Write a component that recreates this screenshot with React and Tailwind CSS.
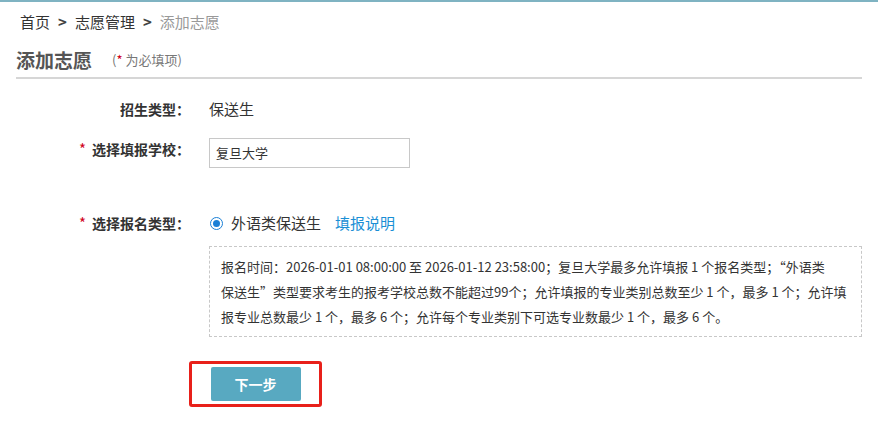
import React from "react";

export default function App() {
  const font = { fontFamily: '"Microsoft YaHei","Noto Sans CJK SC","Noto Sans",sans-serif' };
  return (
    <div className="w-[878px] h-[423px] bg-white overflow-hidden text-[#333]" style={font}>
      <div className="h-[2px] bg-[#7fb3c2]" />
      <div className="flex items-center h-[40px] pl-[20px] text-[15px] text-[#333]">
        <span>首页</span>
        <span className="mx-[8px] font-bold text-[#444]">&gt;</span>
        <span>志愿管理</span>
        <span className="mx-[8px] font-bold text-[#444]">&gt;</span>
        <span className="text-[#999]">添加志愿</span>
      </div>
      <div className="mx-[16px] flex items-center h-[37px] border-b-2 border-[#d6d6d6]">
        <span className="text-[19px] font-bold text-[#555] leading-none">添加志愿</span>
        <span className="ml-[20px] text-[13px] text-[#777]">
          (<span className="text-[#d0021b]">*</span> 为必填项)
        </span>
      </div>

      <div className="flex items-center mt-[19px] h-[22px] text-[14px]">
        <div className="w-[190px] text-right font-bold">招生类型：</div>
        <div className="ml-[19px] text-[15px]">保送生</div>
      </div>

      <div className="flex items-start mt-[18px] text-[14px]">
        <div className="w-[190px] text-right font-bold h-[22px] flex items-center justify-end">
          <span className="text-[#d0021b] text-[15px] mr-[6px] font-normal">*</span>选择填报学校：
        </div>
        <div className="ml-[19px] w-[201px] h-[30px] border border-[#c8c8c8] flex items-center pl-[6px] text-[13px] text-[#333]">
          复旦大学
        </div>
      </div>

      <div className="flex items-center mt-[44px] h-[22px] text-[14px]">
        <div className="w-[190px] text-right font-bold flex items-center justify-end">
          <span className="text-[#d0021b] text-[15px] mr-[6px] font-normal">*</span>选择报名类型：
        </div>
        <div className="ml-[19px] flex items-center text-[15px]">
          <span className="ml-[1px] w-[13px] h-[13px] rounded-full border border-[#1a7fd6] flex items-center justify-center">
            <span className="w-[7px] h-[7px] rounded-full bg-[#1a7fd6]" />
          </span>
          <span className="ml-[8px]">外语类保送生</span>
          <span className="ml-[14px] text-[#1a8fd5]">填报说明</span>
        </div>
      </div>

      <div className="ml-[209px] mt-[12px] w-[653px] border border-dashed border-[#c8c8c8] px-[11px] py-[7px] text-[13px] leading-[25px] text-[#333]">
        <div className="whitespace-nowrap">报名时间：2026-01-01 08:00:00 至 2026-01-12 23:58:00；复旦大学最多允许填报 1 个报名类型；“外语类</div>
        <div className="whitespace-nowrap">保送生”类型要求考生的报考学校总数不能超过99个；允许填报的专业类别总数至少 1 个，最多 1 个；允许填</div>
        <div className="whitespace-nowrap">报专业总数最少 1 个，最多 6 个；允许每个专业类别下可选专业数最少 1 个，最多 6 个。</div>
      </div>

      <div className="ml-[189px] mt-[24px] w-[133px] h-[46px] border-[3px] border-[#e8201a] rounded-[3px] flex items-center justify-center">
        <button className="w-[90px] h-[34px] bg-[#58a9c1] rounded-[2px] text-white font-bold text-[14px]">下一步</button>
      </div>
    </div>
  );
}
